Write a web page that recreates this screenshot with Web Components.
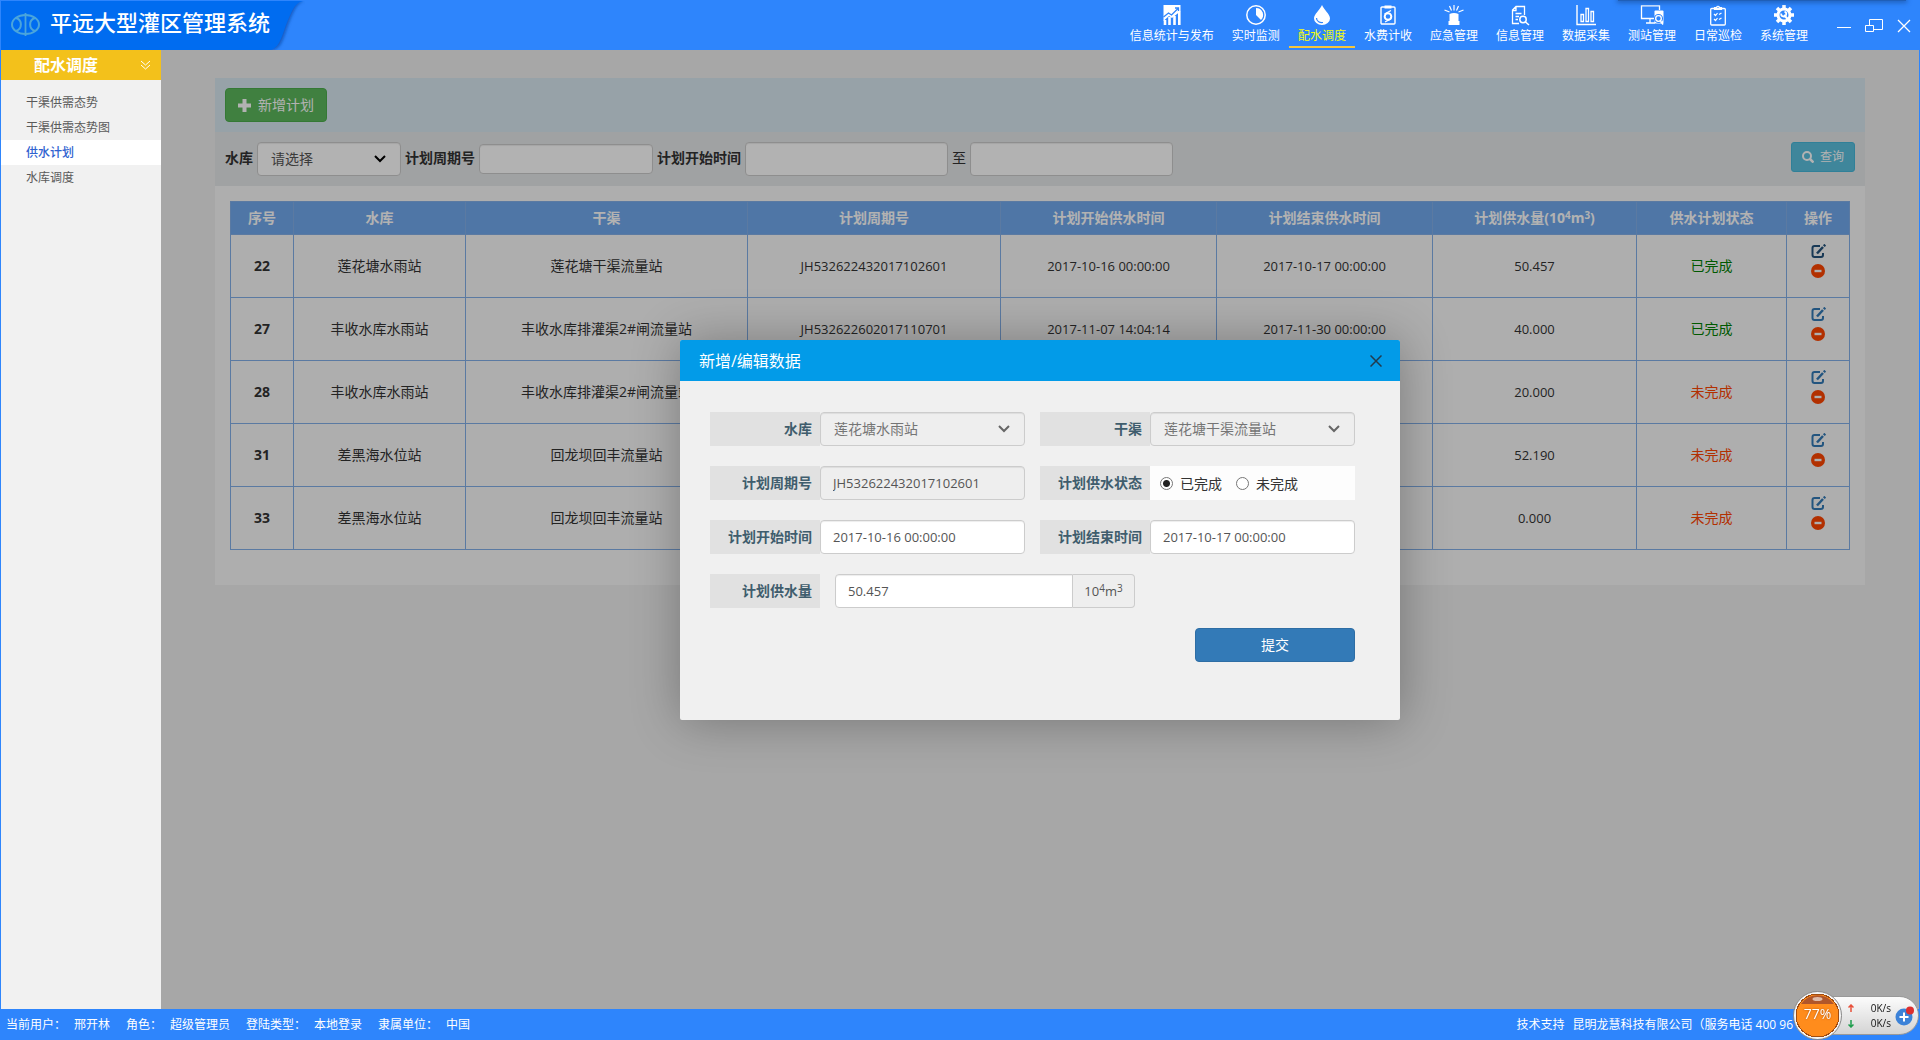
<!DOCTYPE html>
<html lang="zh-CN">
<head>
<meta charset="utf-8">
<title>平远大型灌区管理系统</title>
<style>
  html, body { margin: 0; height: 100%; }
  body {
    font: 14px/20px "Open Sans", "Noto Sans CJK SC", sans-serif;
    color: #333;
    --brand: #2e85fc;
    --brand-dark: #006cf0;
    --field-line: #ccc;
  }
</style>
</head>
<body>
<app-shell>
  <app-header slot="header">
    <nav-item icon="stats">信息统计与发布</nav-item>
    <nav-item icon="clock">实时监测</nav-item>
    <nav-item icon="drop" active>配水调度</nav-item>
    <nav-item icon="fee">水费计收</nav-item>
    <nav-item icon="alarm">应急管理</nav-item>
    <nav-item icon="info">信息管理</nav-item>
    <nav-item icon="bars">数据采集</nav-item>
    <nav-item icon="station">测站管理</nav-item>
    <nav-item icon="clip">日常巡检</nav-item>
    <nav-item icon="gear">系统管理</nav-item>
  </app-header>
  <side-menu slot="side"></side-menu>
  <plan-panel></plan-panel>
  <edit-dialog slot="dialog"></edit-dialog>
  <status-bar slot="footer"></status-bar>
</app-shell>
<speed-widget></speed-widget>

<script>
const BASE = `
  *, *::before, *::after { box-sizing: border-box; }
  button, input, select { font: inherit; margin: 0; }
  button { cursor: pointer; }
  a { text-decoration: none; color: inherit; }
  svg { display: block; }
  .control {
    height: 34px; min-width: 0; padding: 6px 12px; color: #555; background-color: #fff;
    border: 1px solid var(--field-line); border-radius: 4px;
    box-shadow: inset 0 1px 1px rgba(0,0,0,.075);
  }
  .control:disabled { background-color: #eee; opacity: 1; }
  .pick { display: grid; align-items: center; }
  .pick > * { grid-area: 1 / 1; }
  .pick select { appearance: none; width: 100%; padding: 6px 32px 6px 13px; }
  .pick select:disabled { color: #757575; }
  .pick svg { justify-self: end; margin-right: 15px; pointer-events: none; color: #000; }
  .pick select:disabled + svg { color: #666; }
  sup { font-size: 10px; line-height: 0; position: relative; top: -4px; vertical-align: baseline; }
`;

const CHEVRON = `<svg width="12" height="8" viewBox="0 0 12 8" fill="none" stroke="currentColor" stroke-width="2"><path d="M1 1L6 6L11 1"/></svg>`;

function define(name, html, setup) {
  const template = document.createElement('template');
  template.innerHTML = `<style>${BASE}</style>${html}`;
  customElements.define(name, class extends HTMLElement {
    constructor() {
      super();
      this.attachShadow({ mode: 'open' }).append(template.content.cloneNode(true));
    }
    connectedCallback() { if (setup) setup(this, this.shadowRoot); }
  });
}

define('app-shell', `
  <style>
    :host { display: grid; grid-template-rows: 50px 1fr 31px; height: 100vh; background: var(--brand); overflow: hidden; }
    .body { display: flex; min-height: 0; padding: 0 1px; }
    .work { position: relative; flex: 1; min-width: 0; overflow: hidden; background: #f0f0f0; }
    .scroll { height: 100%; padding: 28px 54px; }
    .mask { position: absolute; inset: 0; display: grid; place-items: center; background: rgba(0,0,0,.3); }
  </style>
  <slot name="header"></slot>
  <div class="body">
    <slot name="side"></slot>
    <main class="work">
      <div class="scroll"><slot></slot></div>
      <div class="mask"><slot name="dialog"></slot></div>
    </main>
  </div>
  <slot name="footer"></slot>`);

define('app-header', `
  <style>
    :host { display: flex; justify-content: space-between; position: relative; padding: 1px 9px 0 1px; color: #fff; }
    .brand { position: relative; display: flex; align-items: center; gap: 10px; width: 304px; padding: 0 0 2px 10px; }
    .brand .shape { position: absolute; left: 0; top: 0; width: 304px; height: 49px; }
    .logo, h1 { position: relative; }
    h1 { margin: 0 0 6px; font-size: 22px; line-height: 30px; font-weight: 500; white-space: nowrap; }
    .right { display: flex; gap: 20px; }
    nav { display: flex; }
    .win { display: flex; align-items: center; gap: 14px; }
    .win button { padding: 0; border: 0; background: none; color: #fff; }
    .edge { position: absolute; top: 0; right: 14px; width: 288px; height: 1px; background: #1f5fb8; box-shadow: 0 0 5px 1px #174b98; }
  </style>
  <div class="edge"></div>
  <div class="brand">
    <svg class="shape" viewBox="0 0 304 49"><defs><filter id="b"><feGaussianBlur stdDeviation="1.5"/></filter></defs>
      <path d="M0 0H304C295 1 292 12 287 24C282 39 280 47 272 49H0Z" fill="#0a4aa8" opacity=".7" filter="url(#b)"/>
      <path d="M0 0H302C293 2 290 12 285 24C280 39 277 47 270 49H0Z" fill="#006cf0"/></svg>
    <svg class="logo" width="29" height="23" viewBox="0 0 29 23" fill="none" stroke="#4aa5dc" stroke-width="2">
      <ellipse cx="14.500" cy="11.500" rx="13.500" ry="9.500"/><path d="M14.500 0V23" stroke-width="1.800"/><path d="M5 5C11.500 7 11.500 16 5 18M24 5C17.500 7 17.500 16 24 18"/></svg>
    <h1>平远大型灌区管理系统</h1>
  </div>
  <div class="right">
    <nav><slot></slot></nav>
    <div class="win">
      <button aria-label="最小化"><svg width="14" height="18" viewBox="0 0 14 18" stroke="#fff"><path d="M0 10.500H14"/></svg></button>
      <button aria-label="还原"><svg width="18" height="18" viewBox="0 0 18 18" fill="none" stroke="#fff"><path d="M4.500 8V2.500H17.500V12.500H9M.5 8.500H8.500V14.500H.5Z"/></svg></button>
      <button aria-label="关闭"><svg width="14" height="18" viewBox="0 0 14 18" fill="none" stroke="#fff" stroke-width="1.300"><path d="M1 3L13 15M13 3L1 15"/></svg></button>
    </div>
  </div>`);

const NAV_ICONS = {
  stats: `<path d="M1.500 0H18.500V6L15 9L10 13L7 11L1.500 16Z" fill="currentColor" stroke="none"/><path d="M1.500 12L6.500 8L9.500 10L16 3.500M13 3H16.500V6.500" stroke="#2e85fc" stroke-width="1.300"/><path d="M3 20V15M7.500 20V12M12.500 20V11M17.300 20V6" stroke-width="2.600"/>`,
  clock: `<circle cx="10" cy="10" r="9.200" stroke-width="1.500"/><path d="M10 3A7 7 0 0 1 15 15L10 10Z" fill="currentColor" stroke="none"/>`,
  drop: `<path d="M10 0C12 5 18 9 18 13.500A8 6.500 0 0 1 2 13.500C2 9 8 5 10 0Z" fill="currentColor" stroke="none"/><path d="M4.500 13C4.500 16.500 8 18 11 17.500" stroke="#2e85fc" stroke-width="1.200"/>`,
  fee: `<rect x="3" y="2" width="14" height="17" rx="1" stroke-width="1.400"/><path d="M6.500 .5H13.500V3.500H6.500Z" fill="currentColor" stroke="none"/><circle cx="10" cy="11.500" r="3.300" stroke-width="2"/><path d="M6.500 9L13 5.500M7 17L13.500 13.500" stroke-width="1.300"/>`,
  alarm: `<path d="M5.500 9Q10 7 14.500 9V16H15.500V20H4.500V16H5.500Z" fill="currentColor" stroke="none"/><path d="M10 0V5.500M5.500 1L7.500 5.500M14.500 1L12.500 5.500M.5 5L5.500 7M19.500 5L14.500 7" stroke-width="1.200"/>`,
  info: `<path d="M9 18.500H2.500V5L6 1.500H14.500V10M6 2V5.500H3M5.500 8.500H11.500M5.500 11.500H9M5.500 14.500H8" stroke-width="1.300"/><circle cx="13" cy="14.500" r="3.200" stroke-width="1.500"/><path d="M15.500 17L19 20" stroke-width="1.600"/>`,
  bars: `<path d="M1 0V19.500H20" stroke-width="1.400"/><path d="M5 16.500V9.500H7.500V16.500ZM10 16.500V3.500H12.500V16.500ZM15 16.500V6.500H17.500V16.500Z" stroke-width="1.300"/>`,
  station: `<path d="M12 13.500H-.5V.8H17.500V5M4 18H13M8 14V18" stroke-width="1.300"/><rect x="12.500" y="5.500" width="9" height="13" rx="1" fill="currentColor" stroke="none"/><circle cx="16.500" cy="13.500" r="3.800" stroke="#2e85fc" stroke-width="1.500"/><circle cx="16.500" cy="13.500" r="2.800" stroke-width="1.300" fill="#2e85fc"/><path d="M18.500 16L21 19.500" stroke-width="1.500"/>`,
  clip: `<rect x="2.700" y="3.500" width="14.600" height="16.500" rx="1" stroke-width="1.300"/><path d="M6.500 4.500V2.500H8.500A1.600 1.600 0 0 1 11.500 2.500H13.500V4.500Z" stroke-width="1.200"/><path d="M6 9L7.500 10.500L9.500 8M6 14L7.500 15.500L9.500 13M11 9.500L13.500 8M11 14.500L13.500 13" stroke-width="1.200"/>`,
  gear: `<circle cx="10" cy="10" r="6" stroke-width="3"/><path d="M10 0V4M10 16V20M0 10H4M16 10H20M3 3L5.500 5.500M14.500 14.500L17 17M3 17L5.500 14.500M14.500 5.500L17 3" stroke-width="3.500"/><path d="M10 10L15 15.500" stroke-width="2.200"/><path d="M7.300 8.500A2.500 2.500 0 1 0 10.500 6.700" stroke-width="1.800"/>`
};

define('nav-item', `
  <style>
    :host { display: flex; font-size: 12px; line-height: 16px; color: #fff; }
    a { display: flex; flex-direction: column; align-items: center; gap: 3px; padding: 4px 9px 0; height: 47px; white-space: nowrap; }
    .pic { height: 20px; width: 20px; }
    :host([active]) a { border-bottom: 2px solid #f4c63d; }
    :host([active]) .text { color: #f4fb0c; }
    svg { overflow: visible; }
  </style>
  <a href="#"><span class="pic"></span><span class="text"><slot></slot></span></a>`,
  (host, root) => {
    root.querySelector('.pic').innerHTML =
      `<svg width="20" height="20" viewBox="0 0 20 20" fill="none" stroke="currentColor">${NAV_ICONS[host.getAttribute('icon')]}</svg>`;
  });

define('side-menu', `
  <style>
    :host { display: block; width: 160px; flex: none; background: #f1f1f1; font-size: 12px; }
    h2 { display: flex; align-items: center; justify-content: space-between; height: 30px; margin: 0; padding: 0 11px 0 33px;
      background: #f3c11b; color: #fff; font-size: 16px; line-height: 20px; font-weight: 700; }
    ul { list-style: none; margin: 0; padding: 10px 0; }
    a { display: block; padding-left: 25px; line-height: 25px; color: #5a5a5a; }
    a.on { background: #fff; color: #2f62d0; font-weight: 500; }
  </style>
  <h2>配水调度<svg width="9" height="10" viewBox="0 0 9 10" fill="none" stroke="#fff"><path d="M0 1L4.500 5L9 1M0 5L4.500 9L9 5"/></svg></h2>
  <ul>
    <li><a href="#">干渠供需态势</a></li>
    <li><a href="#">干渠供需态势图</a></li>
    <li><a href="#" class="on">供水计划</a></li>
    <li><a href="#">水库调度</a></li>
  </ul>`);

define('plan-panel', `
  <style>
    :host { display: block; background: #fafafa; }
    .head { padding: 10px; background: #d9e9f1; }
    .add { display: flex; align-items: center; gap: 7px; height: 34px; padding: 0 12px; color: #fff; background: #5cb85c; border: 1px solid #4cae4c; border-radius: 4px; }
    form { display: flex; align-items: center; gap: 4px; padding: 10px; background: #e6e8ea; }
    label { font-weight: 700; line-height: 20px; padding-bottom: 2px; white-space: nowrap; }
    label.plain { font-weight: 400; }
    .w1 { width: 144px; } .w2 { width: 174px; height: 30px; } .w3 { width: 203px; }
    .find { display: flex; align-items: center; align-self: flex-start; gap: 6px; height: 30px; margin-left: auto; padding: 0 10px; font-size: 12px; color: #fff; background: #5bc0de; border: 1px solid #46b8da; border-radius: 3px; }
    plan-table { padding: 15px 15px 35px; }
  </style>
  <div class="head"><button class="add" type="button">
    <svg width="13" height="13" viewBox="0 0 13 13" fill="#fff"><path d="M4.500 0H8.500V4.500H13V8.500H8.500V13H4.500V8.500H0V4.500H4.500Z"/></svg>新增计划</button></div>
  <form>
    <label for="res">水库</label>
    <span class="pick w1"><select id="res" class="control"><option>请选择</option></select>${CHEVRON}</span>
    <label for="no">计划周期号</label>
    <input id="no" class="control w2" type="text">
    <label for="from">计划开始时间</label>
    <input id="from" class="control w3" type="text">
    <label for="to" class="plain">至</label>
    <input id="to" class="control w3" type="text">
    <button class="find" type="button"><svg width="12" height="12" viewBox="0 0 12 12" fill="none" stroke="#fff" stroke-width="2"><circle cx="5" cy="5" r="4"/><path d="M8 8L11.500 11.500" stroke-width="2.500"/></svg>查询</button>
  </form>
  <plan-table></plan-table>`);

const PLANS = [
  [22, '莲花塘水雨站', '莲花塘干渠流量站', 'JH532622432017102601', '2017-10-16 00:00:00', '2017-10-17 00:00:00', '50.457', true],
  [27, '丰收水库水雨站', '丰收水库排灌渠2#闸流量站', 'JH532622602017110701', '2017-11-07 14:04:14', '2017-11-30 00:00:00', '40.000', true],
  [28, '丰收水库水雨站', '丰收水库排灌渠2#闸流量站', '', '', '', '20.000', false],
  [31, '差黑海水位站', '回龙坝回丰流量站', '', '', '', '52.190', false],
  [33, '差黑海水位站', '回龙坝回丰流量站', '', '', '', '0.000', false]
];

define('plan-table', `
  <style>
    :host { display: block; }
    table { width: 100%; table-layout: fixed; border-collapse: collapse; text-align: center; }
    th, td { padding: 0; border: 1px solid #83afe8; }
    thead th { height: 33px; background: #72a9ee; color: #fff; }
    tbody tr { height: 63px; }
    .num { font-size: 13px; }
    .done { color: #008000; } .todo { color: #ff4500; }
    .ops { display: flex; flex-direction: column; align-items: center; gap: 6px; padding-bottom: 11px; }
    .ops button { padding: 0; border: 0; background: none; color: #337ab7; }
    tr:first-child .edit { color: #23527c; }
    .ops .del { color: #ff4500; }
  </style>
  <table>
    <colgroup><col style="width:63px"><col style="width:172px"><col style="width:282px"><col style="width:253px"><col style="width:216px"><col style="width:216px"><col style="width:204px"><col style="width:150px"><col style="width:63px"></colgroup>
    <thead><tr><th>序号</th><th>水库</th><th>干渠</th><th>计划周期号</th><th>计划开始供水时间</th><th>计划结束供水时间</th><th>计划供水量(10<sup>4</sup>m<sup>3</sup>)</th><th>供水计划状态</th><th>操作</th></tr></thead>
    <tbody></tbody>
  </table>`,
  (host, root) => {
    root.querySelector('tbody').innerHTML = PLANS.map(([id, res, canal, no, from, to, amount, done]) => `
      <tr><th scope="row">${id}</th><td>${res}</td><td>${canal}</td><td class="num">${no}</td><td class="num">${from}</td><td class="num">${to}</td><td class="num">${amount}</td>
      <td class="${done ? 'done' : 'todo'}">${done ? '已完成' : '未完成'}</td>
      <td><div class="ops">
        <button class="edit" aria-label="编辑"><svg width="15" height="14" viewBox="0 0 15 14" fill="none" stroke="currentColor" stroke-width="2"><path d="M9 2H3.500Q1.500 2 1.500 4V11Q1.500 13 3.500 13H10Q12 13 12 11V9"/><path d="M6 9.500L12 3" stroke-width="2.500"/><path d="M12.800 2.200L14.300 .7" stroke-width="2.500"/></svg></button>
        <button class="del" aria-label="删除"><svg width="14" height="14" viewBox="0 0 14 14"><circle cx="7" cy="7" r="7" fill="currentColor"/><path d="M3.500 5.800H10.500V8.200H3.500Z" fill="#fafafa"/></svg></button>
      </div></td></tr>`).join('');
  });

define('edit-dialog', `
  <style>
    :host { display: block; width: 720px; height: 380px; background: #f0f0f0; border-radius: 2px; box-shadow: 1px 1px 50px rgba(0,0,0,.3); }
    header { display: flex; align-items: center; justify-content: space-between; height: 41px; padding: 2px 18px 0 19px; background: #029be8; border-radius: 2px 2px 0 0; color: #fff; }
    h2 { margin: 0; font-size: 16px; line-height: 22px; font-weight: 400; }
    header button { padding: 0; border: 0; background: none; }
    form { display: grid; grid-template-columns: 1fr 1fr; gap: 20px 15px; padding: 31px 45px 0 30px; }
    .field { display: flex; height: 34px; }
    .name { width: 110px; flex: none; padding: 7px 8px 0 0; text-align: right; font-weight: 700; line-height: 20px; color: #3f5d6d; background: #e1e1e1; }
    .control, .pick { flex: 1; }
    input.control { font-size: 13px; }
    .radios { flex: 1; display: flex; align-items: center; gap: 14px; padding: 2px 10px 0; background: #fdfdfd; }
    .radios label { display: flex; align-items: center; gap: 7px; }
    input[type=radio] { appearance: none; width: 13px; height: 13px; border: 1px solid #767676; border-radius: 50%; background: #fff; }
    input[type=radio]:checked { background: radial-gradient(circle, #222 0 3px, #fff 4px); }
    .wide { grid-column: 1 / -1; width: 425px; }
    .group { flex: 1; display: flex; margin-left: 15px; }
    .group .control { border-radius: 4px 0 0 4px; }
    .unit { width: 62px; border: 1px solid var(--field-line); border-left: 0; border-radius: 0 4px 4px 0; background: #eee; color: #555; font-size: 13px; line-height: 32px; text-align: center; }
    .submit { grid-column: 2; justify-self: end; width: 160px; height: 34px; padding: 0; color: #fff; background: #337ab7; border: 1px solid #2e6da4; border-radius: 4px; }
  </style>
  <header><h2>新增/编辑数据</h2><button aria-label="关闭"><svg width="12" height="12" viewBox="0 0 12 12" stroke="#223a4c" stroke-width="1.500"><path d="M.5 .5L11.500 11.500M11.500 .5L.5 11.500"/></svg></button></header>
  <form>
    <div class="field"><label class="name" for="res">水库</label><span class="pick"><select id="res" class="control" disabled><option>莲花塘水雨站</option></select>${CHEVRON}</span></div>
    <div class="field"><label class="name" for="canal">干渠</label><span class="pick"><select id="canal" class="control" disabled><option>莲花塘干渠流量站</option></select>${CHEVRON}</span></div>
    <div class="field"><label class="name" for="no">计划周期号</label><input id="no" class="control" type="text" disabled value="JH532622432017102601"></div>
    <div class="field"><span class="name" id="state">计划供水状态</span><div class="radios" role="radiogroup" aria-labelledby="state">
      <label><input type="radio" name="state" checked>已完成</label><label><input type="radio" name="state">未完成</label></div></div>
    <div class="field"><label class="name" for="from">计划开始时间</label><input id="from" class="control" type="text" value="2017-10-16 00:00:00"></div>
    <div class="field"><label class="name" for="to">计划结束时间</label><input id="to" class="control" type="text" value="2017-10-17 00:00:00"></div>
    <div class="field wide"><label class="name" for="amount">计划供水量</label><div class="group"><input id="amount" class="control" type="text" value="50.457"><span class="unit">10<sup>4</sup>m<sup>3</sup></span></div></div>
    <button class="submit" type="button">提交</button>
  </form>`);

define('status-bar', `
  <style>
    :host { display: flex; align-items: center; justify-content: space-between; padding: 0 127px 0 6px; color: #fff; font-size: 12px; line-height: 16px; white-space: nowrap; }
    dl { display: flex; gap: 16px; margin: 0; }
    dl div, .support { display: flex; gap: 8px; }
    dd { margin: 0; }
  </style>
  <dl><div><dt>当前用户：</dt><dd>邢开林</dd></div><div><dt>角色：</dt><dd>超级管理员</dd></div><div><dt>登陆类型：</dt><dd>本地登录</dd></div><div><dt>隶属单位：</dt><dd>中国</dd></div></dl>
  <div class="support"><span>技术支持</span><span>昆明龙慧科技有限公司（服务电话 400 96</span></div>`);

define('speed-widget', `
  <style>
    :host { position: fixed; right: 1px; bottom: 0; display: flex; align-items: center; width: 126px; height: 49px; font-size: 10px; line-height: 16px; color: #111; }
    .pill { display: flex; align-items: center; justify-content: space-between; width: 100%; height: 39px; margin-left: 24px; padding: 0 4px 0 30px; border-radius: 0 20px 20px 0; border: 1px solid #999; background: linear-gradient(#fcfcfc, #d4d4d4); }
    .ball { position: absolute; left: 0; top: 0; width: 49px; height: 49px; display: grid; place-items: center; border-radius: 50%; border: 1px solid #888; background: radial-gradient(circle at 50% 50%, #ff8c1c 0 21px, #a04c10 21px 22px, #f4f4f4 22px); color: #fff; font-size: 14px; text-shadow: 0 0 2px #a04c10; overflow: hidden; }
    .ball svg { position: absolute; left: 0; top: 0; }
    .ball span { position: relative; padding-bottom: 3px; }
    .rates { text-align: right; margin-left: auto; padding-right: 4px; font-weight: 500; }
    .rates div { height: 15px; line-height: 15px; }
  </style>
  <div class="pill">
    <svg width="6" height="24" viewBox="0 0 6 24" fill="none" stroke-width="1.500"><path d="M3 8V1M.5 3.500L3 1L5.500 3.500" stroke="#e8503a"/><path d="M3 16V23M.5 20.500L3 23L5.500 20.500" stroke="#1d9d4c"/></svg>
    <div class="rates"><div>0K/s</div><div>0K/s</div></div>
    <svg width="19" height="20" viewBox="0 0 19 20"><circle cx="9" cy="11" r="8.500" fill="#3c82d8"/><path d="M9 6.500V15.500M4.500 11H13.500" stroke="#fff" stroke-width="2"/><circle cx="15" cy="4.500" r="4" fill="#dc2f2f"/></svg>
  </div>
  <div class="ball"><svg width="47" height="47" viewBox="0 0 47 47"><path d="M7 12A20 20 0 0 1 40 12Z" fill="#b0562a"/><ellipse cx="23.500" cy="7" rx="5" ry="2" fill="#fff" opacity=".6"/></svg><span>77%</span></div>`);
</script>
</body>
</html>
